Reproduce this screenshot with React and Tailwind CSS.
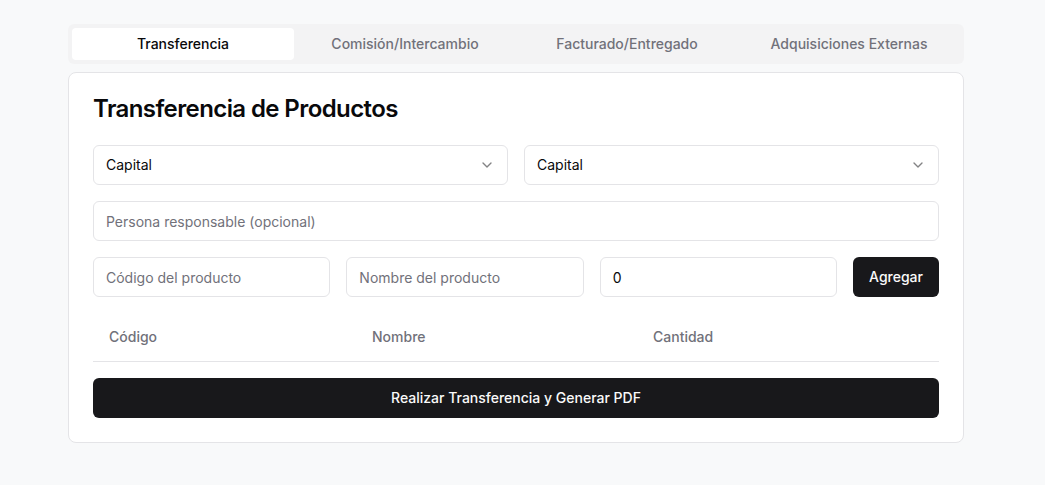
import React from "react";
import { ChevronDown } from "lucide-react";

export default function App() {
  const tabs = ["Transferencia", "Comisión/Intercambio", "Facturado/Entregado", "Adquisiciones Externas"];
  return (
    <div className="min-h-screen w-full bg-[#f8f9fa] text-[#09090b]" style={{ fontFamily: "Inter, 'Noto Sans', sans-serif" }}>
      <div className="w-[1032px] py-6">
        <div className="mx-auto max-w-4xl">
          <div className="grid h-10 grid-cols-4 items-center rounded-md bg-[#f3f3f4] p-1 text-[#71717a]">
            {tabs.map((t, i) => (
              <div
                key={t}
                className={
                  "flex h-8 items-center justify-center rounded-sm px-3 text-sm font-medium " +
                  (i === 0 ? "bg-white text-[#09090b]" : "")
                }
              >
                {t}
              </div>
            ))}
          </div>
          <div className="mt-2 rounded-lg border border-[#e4e4e7] bg-white">
            <div className="p-6">
              <h3 className="text-2xl font-semibold leading-none tracking-tight">Transferencia de Productos</h3>
            </div>
            <div className="px-6 pb-6">
              <div className="flex flex-col gap-4">
                <div className="grid grid-cols-2 gap-4">
                  {[0, 1].map((k) => (
                    <div key={k} className="flex h-10 items-center justify-between rounded-md border border-[#e4e4e7] bg-white px-3 text-sm">
                      <span>Capital</span>
                      <ChevronDown className="h-4 w-4 opacity-50" />
                    </div>
                  ))}
                </div>
                <div className="flex h-10 items-center rounded-md border border-[#e4e4e7] bg-white px-3 pt-px text-sm text-[#71717a]">
                  Persona responsable (opcional)
                </div>
                <div className="flex gap-4">
                  <div className="flex h-10 flex-1 items-center rounded-md border border-[#e4e4e7] px-3 pt-px text-sm text-[#71717a]">Código del producto</div>
                  <div className="flex h-10 flex-1 items-center rounded-md border border-[#e4e4e7] px-3 pt-px text-sm text-[#71717a]">Nombre del producto</div>
                  <div className="flex h-10 flex-1 items-center rounded-md border border-[#e4e4e7] px-3 pt-px text-sm">0</div>
                  <button className="h-10 rounded-md bg-[#18181b] px-4 text-sm font-medium text-[#fafafa]">Agregar</button>
                </div>
                <div className="flex h-[49px] items-center border-b border-[#e4e4e7] text-sm font-medium text-[#71717a]">
                  <div className="w-[263px] px-4">Código</div>
                  <div className="w-[281px] px-4">Nombre</div>
                  <div className="flex-1 px-4">Cantidad</div>
                </div>
                <button className="h-10 w-full rounded-md bg-[#18181b] px-4 text-sm font-medium text-[#fafafa]">
                  Realizar Transferencia y Generar PDF
                </button>
              </div>
            </div>
          </div>
        </div>
      </div>
    </div>
  );
}
